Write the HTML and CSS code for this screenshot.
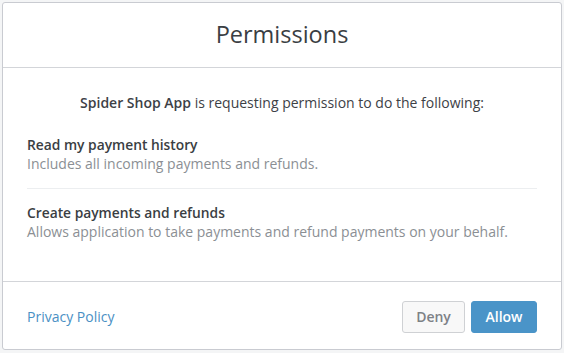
FILE: index.html
```html
<!DOCTYPE html>
<html>
<head>
<meta charset="utf-8">
<link rel="stylesheet" href="styles.css">
</head>
<body>
<div class="dialog">
  <div class="dialog-header">
    <h1 class="dialog-title">Permissions</h1>
  </div>
  <div class="dialog-body">
    <p class="intro"><strong>Spider Shop App</strong> is requesting permission to do the following:</p>
    <ul class="perm-list">
      <li class="perm">
        <div class="perm-title">Read my payment history</div>
        <div class="perm-desc">Includes all incoming payments and refunds.</div>
      </li>
      <li class="perm">
        <div class="perm-title">Create payments and refunds</div>
        <div class="perm-desc">Allows application to take payments and refund payments on your behalf.</div>
      </li>
    </ul>
  </div>
  <div class="dialog-footer">
    <a class="privacy" href="#">Privacy Policy</a>
    <div class="actions">
      <button class="btn btn-deny">Deny</button>
      <button class="btn btn-allow">Allow</button>
    </div>
  </div>
</div>
</body>
</html>
```
FILE: styles.css
```css
html, body {
  margin: 0;
  padding: 0;
  background: #f4f5f6;
}
body {
  padding: 2px 0 0 2px;
  font-family: "Open Sans", "Liberation Sans", sans-serif;
  color: #3d4146;
}
.dialog {
  width: 560px;
  height: 348px;
  background: #fff;
  border: 1px solid #c9cbd1;
  border-radius: 3px;
  display: flex;
  flex-direction: column;
  box-sizing: border-box;
}
.dialog-header {
  height: 64px;
  flex: none;
  border-bottom: 1px solid #d3d5d9;
  display: flex;
  align-items: center;
  justify-content: center;
}
.dialog-title {
  margin: 0 0 2px;
  font-weight: 400;
  font-size: 23.5px;
  color: #3a3e43;
}
.dialog-body {
  flex: 1;
  padding: 0 24px;
}
.intro {
  margin: 25px 0 9px;
  text-align: center;
  font-size: 14px;
  line-height: 19px;
}
.intro strong {
  font-weight: 600;
}
.perm-list {
  list-style: none;
  margin: 0;
  padding: 0;
}
.perm {
  padding: 14px 0 15px;
  border-bottom: 1px solid #eceef0;
  font-size: 14px;
  line-height: 19px;
}
.perm:last-child {
  border-bottom: none;
}
.perm-title {
  font-weight: 600;
  font-size: 13.8px;
  color: #3a3e43;
}
.perm-desc {
  color: #8b8f94;
}
.dialog-footer {
  height: 68px;
  flex: none;
  border-top: 1px solid #d3d5d9;
  display: flex;
  align-items: center;
  justify-content: space-between;
  padding: 2px 24px 0 24px;
  box-sizing: border-box;
}
.privacy {
  color: #4a90c4;
  text-decoration: none;
  font-size: 14px;
}
.actions {
  display: flex;
  gap: 6px;
}
.btn {
  height: 32px;
  border-radius: 3px;
  font-family: inherit;
  font-size: 14px;
  font-weight: 600;
  padding: 0;
  cursor: pointer;
}
.btn-deny {
  width: 63px;
  background: #f8f8f8;
  border: 1px solid #cfd1d4;
  color: #7d8186;
}
.btn-allow {
  width: 66px;
  background: #4a94c8;
  border: 1px solid #4a94c8;
  color: #fff;
}
```
